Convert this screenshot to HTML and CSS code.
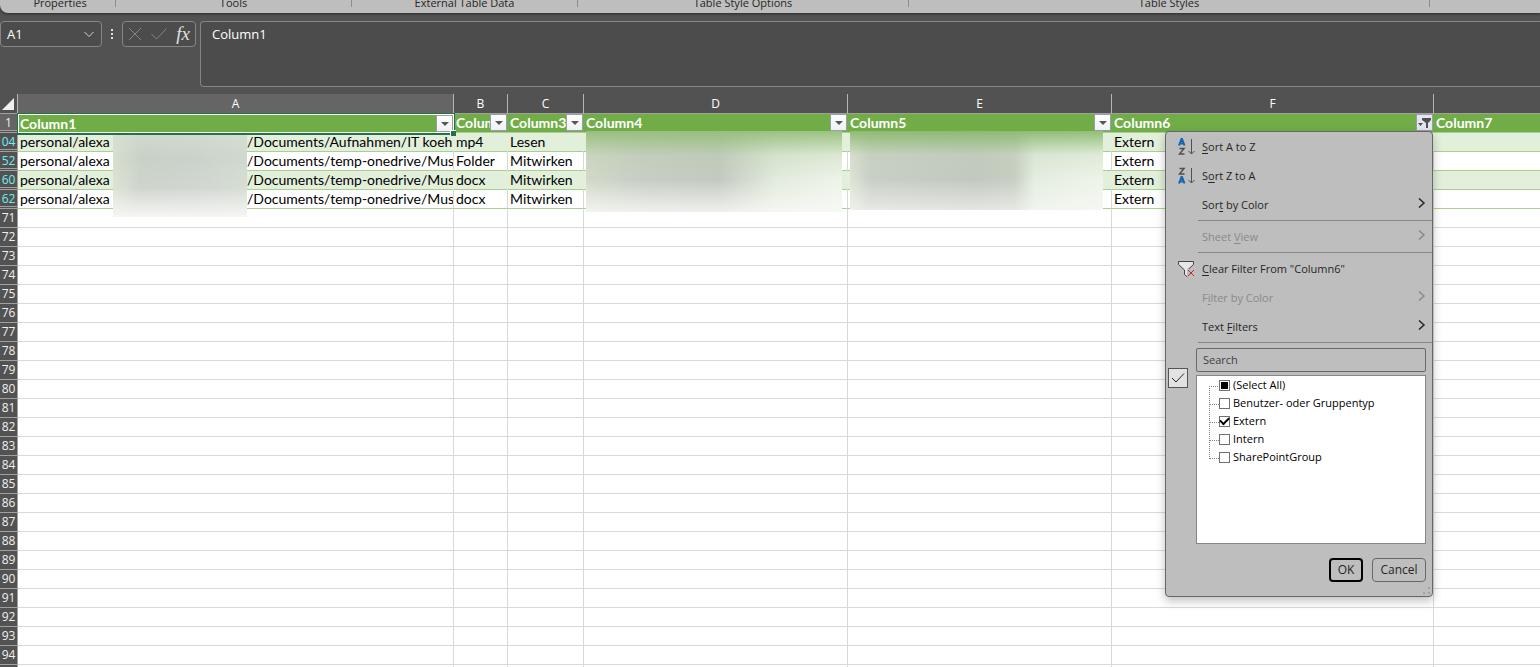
FILE: index.html
```
<!DOCTYPE html>
<html lang="en">

<head>
    <meta charset="UTF-8">
    <meta name="viewport" content="width=device-width, initial-scale=1.0">
    <title>Workbook</title>
    <link rel="stylesheet" href="styles.css">
</head>

<body>
    <div class="app">
        <header class="ribbon">
            <span class="group properties">Properties</span>
            <span class="group tools">Tools</span>
            <span class="group external">External Table Data</span>
            <span class="group options">Table Style Options</span>
            <span class="group table-styles">Table Styles</span>
            <span class="group"></span>
        </header>

        <section class="formula-bar">
            <button class="name-box" type="button" aria-label="Name box">
                <span>A1</span>
                <svg width="12" height="12" viewBox="0 0 12 12"><path d="M1.500 4L6 8.500 10.500 4" /></svg>
            </button>
            <svg class="dots" width="4" height="24" viewBox="0 0 4 24">
                <path d="M1 7h2v2H1zM1 11h2v2H1zM1 15h2v2H1z" />
            </svg>
            <div class="formula-tools">
                <button type="button" aria-label="Cancel entry"><svg class="dim" width="14" height="14" viewBox="0 0 14 14"><path d="M1 1l12 12M13 1L1 13" /></svg></button>
                <button type="button" aria-label="Enter"><svg class="dim" width="16" height="14" viewBox="0 0 16 14"><path d="M0.500 7l5 5L15.500 1.500" /></svg></button>
                <button class="fx" type="button" aria-label="Insert function">fx</button>
            </div>
            <textarea class="formula" aria-label="Formula">Column1</textarea>
        </section>

        <table class="sheet">
            <colgroup>
                <col class="col-num">
                <col class="col-a">
                <col class="col-b">
                <col class="col-c">
                <col class="col-d">
                <col class="col-e">
                <col class="col-f">
                <col>
            </colgroup>
            <thead>
                <tr class="letters">
                    <th class="corner"><svg width="17" height="19" viewBox="0 0 17 19"><path d="M14 4v12H2z" /></svg></th>
                    <th class="selected">A</th>
                    <th>B</th>
                    <th>C</th>
                    <th>D</th>
                    <th>E</th>
                    <th>F</th>
                    <th></th>
                </tr>
            </thead>
            <tbody>
                <tr class="titles">
                    <th class="num selected folded">1</th>
                    <td class="active">
                        <div class="title"><span>Column1</span><button class="filter" type="button" aria-label="Filter Column1"></button></div>
                    </td>
                    <td>
                        <div class="title"><span>Column2</span><button class="filter" type="button" aria-label="Filter Column2"></button></div>
                    </td>
                    <td>
                        <div class="title"><span>Column3</span><button class="filter" type="button" aria-label="Filter Column3"></button></div>
                    </td>
                    <td>
                        <div class="title"><span>Column4</span><button class="filter" type="button" aria-label="Filter Column4"></button></div>
                        <div class="redacted red-d"></div>
                    </td>
                    <td>
                        <div class="title"><span>Column5</span><button class="filter" type="button" aria-label="Filter Column5"></button></div>
                        <div class="redacted red-e"></div>
                    </td>
                    <td>
                        <div class="title"><span>Column6</span>
                            <button class="filter on" type="button" aria-label="Filter Column6">
                                <svg width="15" height="15" viewBox="0 0 15 15"><path d="M1 8h5l-2.500 3z M5 3h9v2l-3 3v5H9V8L5 5z" /></svg>
                            </button>
                        </div>

                        <div class="menu">
                            <button class="item" type="button">
                                <svg class="icon" width="17" height="18" viewBox="0 0 17 18">
                                    <path class="blue" d="M1 7.500L3.500 1h.5l2.500 6.500M2 5.500h3.500" />
                                    <path class="ink" d="M1.500 10.500h4.500L1.500 16H6.500" />
                                    <path class="ink thin" d="M13.500 1v15M10.500 13l3 3 3-3" />
                                </svg>
                                <span><u>S</u>ort A to Z</span>
                            </button>
                            <button class="item" type="button">
                                <svg class="icon" width="17" height="18" viewBox="0 0 17 18">
                                    <path class="ink" d="M1.500 1.500h4.500L1.500 7H6.500" />
                                    <path class="blue" d="M1 16.500L3.500 10h.5l2.500 6.500M2 14.500h3.500" />
                                    <path class="ink thin" d="M13.500 1v15M10.500 13l3 3 3-3" />
                                </svg>
                                <span>S<u>o</u>rt Z to A</span>
                            </button>
                            <button class="item" type="button">
                                <span>Sor<u>t</u> by Color</span>
                                <svg class="arrow" width="8" height="10" viewBox="0 0 8 10"><path d="M1 0.500L6 5l-5 4.500" /></svg>
                            </button>
                            <hr>
                            <button class="item" type="button" disabled>
                                <span>Sheet <u>V</u>iew</span>
                                <svg class="arrow" width="8" height="10" viewBox="0 0 8 10"><path d="M1 0.500L6 5l-5 4.500" /></svg>
                            </button>
                            <hr>
                            <button class="item" type="button">
                                <svg class="icon" width="17" height="18" viewBox="0 0 17 18">
                                    <path class="funnel" d="M0.500 1.500h15v3L9.500 10v7L6.500 14.500V10L0.500 4.500z" />
                                    <path class="patch" d="M9 9h8v8H9z" />
                                    <path class="red" d="M10 10l6 6M16 10l-6 6" />
                                </svg>
                                <span><u>C</u>lear Filter From "Column6"</span>
                            </button>
                            <button class="item" type="button" disabled>
                                <span>F<u>i</u>lter by Color</span>
                                <svg class="arrow" width="8" height="10" viewBox="0 0 8 10"><path d="M1 0.500L6 5l-5 4.500" /></svg>
                            </button>
                            <button class="item" type="button">
                                <span>Text <u>F</u>ilters</span>
                                <svg class="arrow" width="8" height="10" viewBox="0 0 8 10"><path d="M1 0.500L6 5l-5 4.500" /></svg>
                            </button>
                            <hr>
                            <form class="picker">
                                <span class="picked"><svg width="14" height="12" viewBox="0 0 14 12"><path d="M1 6l4 4 8-8.500" /></svg></span>
                                <div class="choices">
                                    <input class="search" type="text" placeholder="Search" aria-label="Search">
                                    <ul class="values">
                                        <li><label><input class="some" type="checkbox">(Select All)</label></li>
                                        <li><label><input type="checkbox">Benutzer- oder Gruppentyp</label></li>
                                        <li><label><input type="checkbox" checked>Extern</label></li>
                                        <li><label><input type="checkbox">Intern</label></li>
                                        <li><label><input type="checkbox">SharePointGroup</label></li>
                                    </ul>
                                    <div class="buttons">
                                        <button class="ok" type="button">OK</button>
                                        <button type="button">Cancel</button>
                                    </div>
                                </div>
                            </form>
                            <svg class="grip" width="8" height="8" viewBox="0 0 8 8"><path d="M5 0h2v2H5zM0 5h2v2H0zM5 5h2v2H5z" /></svg>
                        </div>
                    </td>
                    <td>
                        <div class="title"><span>Column7</span></div>
                    </td>
                </tr>
                <tr class="data band">
                    <th class="num found folded">04</th>
                    <td>
                        <div class="path"><span class="start">personal/alexa</span><span>/Documents/Aufnahmen/IT koehl</span></div>
                        <div class="redacted red-a"></div>
                    </td>
                    <td>mp4</td>
                    <td>Lesen</td>
                    <td></td>
                    <td></td>
                    <td>Extern</td>
                    <td></td>
                </tr>
                <tr class="data">
                    <th class="num found folded">52</th>
                    <td><div class="path"><span class="start">personal/alexa</span><span>/Documents/temp-onedrive/Mus</span></div></td>
                    <td>Folder</td>
                    <td>Mitwirken</td>
                    <td></td>
                    <td></td>
                    <td>Extern</td>
                    <td></td>
                </tr>
                <tr class="data band">
                    <th class="num found folded">60</th>
                    <td><div class="path"><span class="start">personal/alexa</span><span>/Documents/temp-onedrive/Mus</span></div></td>
                    <td>docx</td>
                    <td>Mitwirken</td>
                    <td></td>
                    <td></td>
                    <td>Extern</td>
                    <td></td>
                </tr>
                <tr class="data">
                    <th class="num found folded">62</th>
                    <td><div class="path"><span class="start">personal/alexa</span><span>/Documents/temp-onedrive/Mus</span></div></td>
                    <td>docx</td>
                    <td>Mitwirken</td>
                    <td></td>
                    <td></td>
                    <td>Extern</td>
                    <td></td>
                </tr>
            </tbody>
            <tbody class="empty"></tbody>
        </table>
    </div>

    <script src="script.js"></script>
</body>

</html>
```
FILE: styles.css
```
* {
    box-sizing: border-box;
}

body {
    margin: 0;
    background: #fff;
    font-family: "Open Sans", "Noto Sans", sans-serif;
    font-size: 12px;
}

button,
input,
textarea {
    font: inherit;
    color: inherit;
}

.app {
    height: 100vh;
    overflow: hidden;
    background: #525252;
}

/* ribbon */
.ribbon {
    display: flex;
    height: 13px;
    background: #bebebe;
    border-bottom-left-radius: 8px;
    box-shadow: 0 1px 3px #2b2b2b;
    font-size: 11px;
    color: #262626;
}

.group {
    flex: 1;
    height: 7px;
    border-right: 1px solid #8c8c8c;
    line-height: 6px;
    text-align: center;
}

.group:last-child {
    border-right: 0;
}

.properties {
    flex: 0 0 116px;
    padding-left: 5px;
}

.tools {
    flex: 0 0 236px;
}

.external {
    flex: 0 0 226px;
}

.options {
    flex: 0 0 331px;
}

.table-styles {
    flex: 0 0 521px;
}

/* formula bar */
.formula-bar {
    display: flex;
    align-items: flex-start;
    padding: 8px 0 7px;
    color: #fff;
}

.formula-bar svg {
    fill: none;
    stroke: #d4d4d4;
}

.name-box,
.formula-tools,
.formula {
    border: 1px solid #858585;
    border-radius: 4px;
    background: #4c4c4c;
}

.name-box {
    display: flex;
    align-items: center;
    justify-content: space-between;
    width: 102px;
    height: 26px;
    padding: 0 6px;
    font-size: 13px;
}

.formula-bar .dots {
    margin: 1px 8px 0;
    fill: #e0e0e0;
    stroke: none;
}

.formula-tools {
    display: flex;
    align-items: center;
    justify-content: space-between;
    width: 74px;
    height: 26px;
    margin-right: 4px;
    padding: 0 5px;
}

.formula-tools button {
    display: flex;
    padding: 0;
    border: 0;
    background: none;
}

.formula-bar .dim {
    stroke: #858585;
}

.formula-tools .fx {
    font: italic 19px/18px "Liberation Serif", serif;
    color: #e0e0e0;
}

.formula {
    flex: 1;
    height: 66px;
    padding: 3px 11px;
    border-right: 0;
    border-radius: 4px 0 0 4px;
    font-size: 13px;
    line-height: 18px;
    resize: none;
    outline: none;
}

/* sheet */
.sheet {
    width: 100%;
    table-layout: fixed;
    border-collapse: separate;
    border-spacing: 0;
    background: #fff;
    font-family: Lato, "Open Sans", sans-serif;
    font-size: 14px;
    line-height: 18px;
}

.col-num {
    width: 18px;
}

.col-a {
    width: 436px;
}

.col-b {
    width: 54px;
}

.col-c {
    width: 76px;
}

.col-d,
.col-e {
    width: 264px;
}

.col-f {
    width: 322px;
}

.sheet th,
.sheet td {
    height: 19px;
    padding: 0;
    font-weight: normal;
}

.sheet td {
    position: relative;
    padding-left: 2px;
    border-right: 1px solid #d9d9d9;
    border-bottom: 1px solid #d9d9d9;
    white-space: nowrap;
}

.sheet td:last-child {
    border-right: 0;
}

.sheet th {
    font-family: "Open Sans", "Noto Sans", sans-serif;
    font-size: 12px;
}

.sheet .letters th {
    height: 20px;
    background: #525252;
    border-right: 1px solid #b5b5b5;
    border-bottom: 1px solid #a0a0a0;
    color: #fff;
}

.sheet .letters th:last-child {
    border-right: 0;
}

.sheet .letters .selected {
    background: #656565;
    border-bottom-color: #217346;
}

.corner svg {
    display: block;
    fill: #f0f0f0;
}

.sheet .num {
    background: #525252;
    border-right: 1px solid #a0a0a0;
    border-bottom: 1px solid #a0a0a0;
    color: #f0f0f0;
    text-align: center;
}

.sheet .selected {
    background: #656565;
}

.sheet .found {
    color: #6ff0f0;
}

.sheet .folded {
    box-shadow: inset 0 -1px #525252, inset 0 -2px #a0a0a0;
}

.sheet .titles td {
    border-right: 0;
    border-bottom: 1px solid #a9d08e;
    background: #70ad47;
}

.sheet .titles .active {
    z-index: 2;
    border: 1px solid #fff;
    padding-left: 1px;
    box-shadow: 0 0 0 1px #217346, 0 1px 0 1px #217346;
}

.active::after {
    content: "";
    position: absolute;
    right: -3px;
    bottom: -4px;
    width: 5px;
    height: 5px;
    border: solid #fff;
    border-width: 1px 0 0 1px;
    background: #217346;
}

.title {
    display: flex;
    height: 18px;
    color: #fff;
    font-weight: bold;
}

.active .title {
    height: 17px;
    line-height: 17px;
}

.title > span {
    flex: 1;
    min-width: 0;
    overflow: hidden;
}

.filter {
    flex: none;
    width: 17px;
    height: 17px;
    margin-right: 1px;
    padding: 0;
    border: 1px solid #9c9ca8;
    background: linear-gradient(#fff, #eef0f6);
}

.active .filter {
    margin-right: 0;
}

.filter::after {
    content: "";
    display: block;
    width: 0;
    margin: auto;
    border: 4px solid transparent;
    border-top-color: #555;
    border-bottom-width: 0;
}

.filter.on::after {
    content: none;
}

.filter.on {
    background: #e4e6ee;
}

.filter svg {
    display: block;
    fill: #505050;
}

.sheet .data td {
    border-bottom-color: #a9d08e;
    color: #000;
}

.sheet .band td {
    background: #e2efda;
    border-right-color: #e2efda;
}

.path {
    display: flex;
    overflow: hidden;
}

.path .start {
    flex: 0 0 227px;
}

/* blurred-out personal data */
.redacted {
    position: absolute;
    z-index: 1;
}

.red-a {
    left: 95px;
    top: -1px;
    width: 134px;
    height: 85px;
    background:
        linear-gradient(rgba(212, 224, 211, 0.7), rgba(200, 208, 200, 0.1) 30%, rgba(255, 255, 255, 0.1) 65%, #f6f6f5),
        linear-gradient(90deg, #d9e1d0, #c9d0c6 20%, #cbd2cb 60%, #d2dacf);
}

.red-d {
    left: 2px;
    top: 17px;
    width: 256px;
    height: 81px;
    background:
        linear-gradient(rgba(146, 189, 118, 0.9), rgba(180, 205, 165, 0.3) 30%, rgba(255, 255, 255, 0) 60%, rgba(250, 250, 248, 0.8)),
        linear-gradient(90deg, #d3d9c9, #c8cec5 20%, #c3cac0 52%, #e2ebdd 74%, #edf4e9);
}

.red-e {
    left: 2px;
    top: 17px;
    width: 253px;
    height: 79px;
    background:
        linear-gradient(rgba(136, 184, 107, 0.9), rgba(190, 212, 178, 0.3) 30%, rgba(255, 255, 255, 0) 60%, rgba(250, 250, 248, 0.6)),
        linear-gradient(90deg, #dfe3d5, #c9cfc6 8%, #c2c8bf 50%, #c7cec3 65%, #e4ede0 73%, #edf4e9);
}

/* filter menu */
.menu {
    position: absolute;
    z-index: 2;
    top: 17px;
    right: 1px;
    width: 268px;
    padding-bottom: 14px;
    border: 1px solid #666;
    border-radius: 4px;
    background: #bebebe;
    box-shadow: 0 4px 10px rgba(0, 0, 0, 0.25);
    color: #262626;
    font-family: "Open Sans", "Noto Sans", sans-serif;
    font-size: 11px;
    line-height: 16px;
}

.item {
    display: grid;
    grid-template-columns: 24px 1fr 8px;
    align-items: center;
    width: 100%;
    height: 29px;
    padding: 0 6px 0 12px;
    border: 0;
    background: none;
    text-align: left;
}

.item span {
    grid-column: 2;
}

.item:disabled {
    color: #8a8a8a;
}

.menu u {
    text-underline-offset: 2px;
}

.menu svg {
    fill: none;
    stroke: currentColor;
}

.menu .blue {
    stroke: #1267b0;
    stroke-width: 2;
}

.menu .ink {
    stroke: #505050;
    stroke-width: 1.500;
}

.menu .thin {
    stroke-width: 1;
}

.menu .funnel {
    fill: #e6e6e6;
    stroke: #444;
}

.menu .patch {
    fill: #bebebe;
    stroke: none;
}

.menu .red {
    stroke: #c0282d;
}

.arrow {
    margin-bottom: 3px;
}

.item .arrow {
    stroke-width: 1.500;
}

.menu hr {
    height: 1px;
    margin: 1px 0 1px 32px;
    border: 0;
    background: #868686;
}

.picker {
    display: flex;
    padding: 4px 6px 0 2px;
}

.picked {
    display: flex;
    flex: none;
    align-items: center;
    justify-content: center;
    width: 20px;
    height: 20px;
    margin: 20px 8px 0 0;
    border: 1px solid #555;
    background: #e2e2e2;
}

.choices {
    flex: 1;
}

.search {
    display: block;
    width: 100%;
    height: 24px;
    padding: 0 6px 2px;
    border: 1px solid #686868;
    border-radius: 2px;
    background: none;
}

.search::placeholder {
    color: #404040;
}

.values {
    height: 169px;
    margin: 3px 0 14px;
    padding: 0 0 0 12px;
    border: 1px solid #868686;
    background: #fff;
    color: #000;
    list-style: none;
}

.values li {
    position: relative;
    height: 18px;
}

/* dotted tree lines */
.values li::before {
    content: "";
    position: absolute;
    left: 0;
    top: -8px;
    width: 9px;
    height: 18px;
    border: dotted #808080;
    border-width: 0 0 1px 1px;
}

.values li:first-child::before {
    top: 9px;
    height: 1px;
    border-left: 0;
}

.values label {
    display: flex;
    align-items: center;
    gap: 3px;
    padding-left: 10px;
    line-height: 18px;
}

.values input {
    appearance: none;
    display: grid;
    place-content: center;
    width: 11px;
    height: 11px;
    margin: 0;
    border: 1px solid #707070;
    background: #fff;
}

.values .some::before {
    content: "";
    width: 7px;
    height: 7px;
    background: #000;
}

.values input:checked::before {
    content: "";
    width: 7px;
    height: 4px;
    margin-bottom: 2px;
    border: solid #000;
    border-width: 0 0 2px 2px;
    transform: rotate(-45deg);
}

.buttons {
    display: flex;
    justify-content: flex-end;
    gap: 9px;
}

.buttons button {
    width: 54px;
    height: 24px;
    padding: 0;
    border: 1px solid #686868;
    border-radius: 4px;
    background: none;
    font-size: 12px;
}

.buttons .ok {
    width: 34px;
    border: 2px solid #000;
}

.menu .grip {
    position: absolute;
    right: 1px;
    bottom: 1px;
    fill: #a2a2a2;
    stroke: none;
}
```
FILE: script.js
```
var empty = document.querySelector(".empty");

// rows below the table
for (let i = 71; i < 96; i++) {
    var tr = document.createElement("tr");
    tr.innerHTML = "<th class='num'>" + i + "</th>" + "<td></td>".repeat(7);
    empty.appendChild(tr);
}
```
